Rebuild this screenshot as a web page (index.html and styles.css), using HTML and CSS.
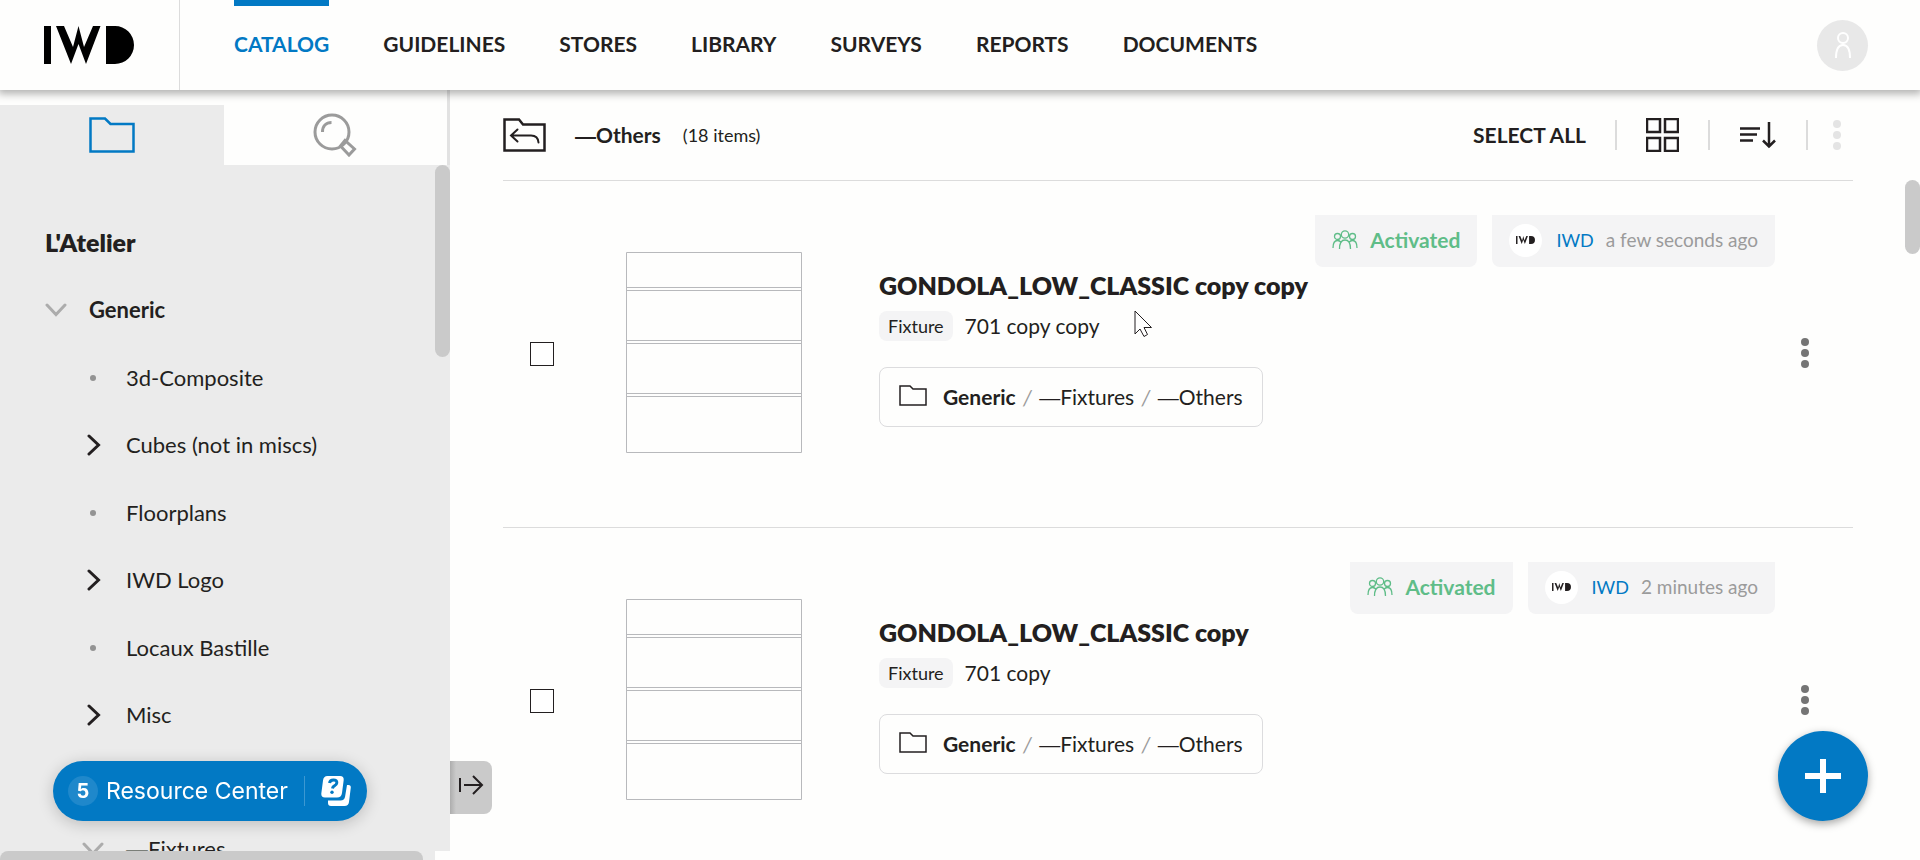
FILE: index.html
```html
<!DOCTYPE html>
<html lang="en">
<head>
<meta charset="utf-8">
<title>IWD Catalog</title>
<link rel="stylesheet" href="styles.css">
</head>
<body>
<svg class="sprite" aria-hidden="true">
  <symbol id="logo" viewBox="0 0 90 38"><path d="M0 0h7v38H0zM12 0h8l9 21 5.500-21 5.500 21 9-21h7.500L42 38l-7.500-20L27 38zM62 0h9a19 19 0 0 1 0 38h-9z"/></symbol>
  <symbol id="folder" viewBox="0 0 46 36"><path d="M1.500 1.500H16l5.500 5.500h23v27.500h-43z"/></symbol>
  <symbol id="folder-small" viewBox="0 0 28 21"><path d="M1 1h10l3 3h13v16H1z"/></symbol>
  <symbol id="people" viewBox="0 0 26 20"><g><circle cx="13" cy="4.500" r="3.700"/><circle cx="5.500" cy="6.500" r="3"/><circle cx="20.500" cy="6.500" r="3"/><path d="M7.500 19c0-5 1.500-9 5.500-9s5.500 4 5.500 9M1 18c0-4 1.500-7.500 4.500-7.500 1.500 0 2.700.7 3.400 2M25 18c0-4-1.500-7.500-4.500-7.500-1.500 0-2.700.7-3.400 2"/></g></symbol>
  <symbol id="dots" viewBox="0 0 8 30"><circle cx="4" cy="4" r="4"/><circle cx="4" cy="15" r="4"/><circle cx="4" cy="26" r="4"/></symbol>
  <symbol id="down" viewBox="0 0 22 14"><path d="M2 2l9 9.500L20 2"/></symbol>
  <symbol id="right" viewBox="0 0 14 22"><path d="M2 2l9.500 9L2 20"/></symbol>
  <symbol id="shelf" viewBox="0 0 176 201"><path d="M.5.500h175v200H.500zM0 35.500h176M0 38.500h176M0 88.500h176M0 91.500h176M0 141.500h176M0 144.500h176"/></symbol>
</svg>

<header class="header">
  <a class="brand" href="#" aria-label="IWD home"><svg width="90" height="38"><use href="#logo"/></svg></a>
  <nav class="nav">
    <a class="nav-link active" href="#">CATALOG</a>
    <a class="nav-link" href="#">GUIDELINES</a>
    <a class="nav-link" href="#">STORES</a>
    <a class="nav-link" href="#">LIBRARY</a>
    <a class="nav-link" href="#">SURVEYS</a>
    <a class="nav-link" href="#">REPORTS</a>
    <a class="nav-link" href="#">DOCUMENTS</a>
  </nav>
  <button class="avatar" aria-label="Account"><svg width="18" height="28" viewBox="0 0 18 28"><circle cx="9" cy="7" r="5"/><path d="M2 27c0-7 2-13 7-13s7 6 7 13"/></svg></button>
</header>

<div class="layout">
  <aside class="sidebar">
    <div class="tabs">
      <button class="tab selected" aria-label="Folders"><svg class="icon" width="46" height="36"><use href="#folder"/></svg></button>
      <button class="tab" aria-label="Search"><svg class="icon search" width="44" height="44" viewBox="0 0 44 44"><circle cx="19" cy="19" r="17"/><path d="M9.500 19c0-6 3.500-9.500 9-9.500M27.500 33l4.500-5.500 9.500 8.500-5.500 6z"/></svg></button>
    </div>
    <div class="tree-pane">
      <h2 class="tree-title">L'Atelier</h2>
      <ul class="tree">
        <li class="node branch root"><svg class="chevron muted" width="22" height="14"><use href="#down"/></svg><a href="#">Generic</a></li>
        <li class="node"><span class="bullet"></span><a href="#">3d-Composite</a></li>
        <li class="node branch"><svg class="chevron" width="14" height="22"><use href="#right"/></svg><a href="#">Cubes (not in miscs)</a></li>
        <li class="node"><span class="bullet"></span><a href="#">Floorplans</a></li>
        <li class="node branch"><svg class="chevron" width="14" height="22"><use href="#right"/></svg><a href="#">IWD Logo</a></li>
        <li class="node"><span class="bullet"></span><a href="#">Locaux Bastille</a></li>
        <li class="node branch"><svg class="chevron" width="14" height="22"><use href="#right"/></svg><a href="#">Misc</a></li>
        <li class="node spacer" aria-hidden="true"></li>
        <li class="node branch open"><svg class="chevron muted" width="22" height="14"><use href="#down"/></svg><a href="#"><span class="dash">—</span>Fixtures</a></li>
      </ul>
      <span class="thumb-y"></span>
    </div>
    <div class="track-x"><span class="thumb-x"></span></div>
    <button class="expander" aria-label="Expand panel"><svg width="26" height="22" viewBox="0 0 26 22"><path d="M2 4v14M6 11h18M15 2l9 9-9 9"/></svg></button>
  </aside>

  <main class="content">
    <div class="toolbar">
      <button class="icon-button" aria-label="Back"><svg class="icon dark" width="43" height="34" viewBox="0 0 43 34"><path d="M1.500 1.500H16l4 5h21.500v26h-40z"/><path class="thin" d="M14.500 11.500L8 17.500l6.500 6M8 17.500h20q7 0 7.500 7"/></svg></button>
      <h1 class="crumb-title"><span class="dash">—</span>Others</h1>
      <span class="count">(18 items)</span>
      <div class="tools">
        <button class="select-all">SELECT ALL</button>
        <span class="divider"></span>
        <button class="icon-button grid" aria-label="Grid view"><svg class="icon dark" width="33" height="34" viewBox="0 0 33 34"><path d="M1 1h13v13H1zM19 1h13v13H19zM1 20h13v13H1zM19 20h13v13H19z"/></svg></button>
        <span class="divider"></span>
        <button class="icon-button sort" aria-label="Sort"><svg class="icon dark" width="38" height="28" viewBox="0 0 38 28"><path d="M1 7.500h20M1 13.500h17M1 19.500h13M30 1v24M24 19.500l6 6 6-6"/></svg></button>
        <span class="divider"></span>
        <button class="icon-button more" aria-label="More" disabled><svg width="8" height="30"><use href="#dots"/></svg></button>
      </div>
    </div>

    <article class="item">
      <input class="check" type="checkbox" aria-label="Select GONDOLA_LOW_CLASSIC copy copy">
      <svg class="shelf" width="176" height="201"><use href="#shelf"/></svg>
      <div class="info">
        <h3 class="name">GONDOLA_LOW_CLASSIC copy copy</h3>
        <p class="meta"><span class="chip">Fixture</span><span>701 copy copy</span></p>
        <div class="path"><svg width="28" height="21"><use href="#folder-small"/></svg><span><a class="strong" href="#">Generic</a> <i>/</i> <a href="#"><span class="dash">—</span>Fixtures</a> <i>/</i> <a href="#"><span class="dash">—</span>Others</a></span></div>
      </div>
      <div class="badges">
        <span class="badge status"><svg width="26" height="20"><use href="#people"/></svg>Activated</span>
        <span class="badge author"><span class="disc"><svg width="19" height="8"><use href="#logo"/></svg></span><a href="#">IWD</a><time>a few seconds ago</time></span>
      </div>
      <button class="icon-button kebab" aria-label="Item menu"><svg width="8" height="30"><use href="#dots"/></svg></button>
    </article>

    <article class="item">
      <input class="check" type="checkbox" aria-label="Select GONDOLA_LOW_CLASSIC copy">
      <svg class="shelf" width="176" height="201"><use href="#shelf"/></svg>
      <div class="info">
        <h3 class="name">GONDOLA_LOW_CLASSIC copy</h3>
        <p class="meta"><span class="chip">Fixture</span><span>701 copy</span></p>
        <div class="path"><svg width="28" height="21"><use href="#folder-small"/></svg><span><a class="strong" href="#">Generic</a> <i>/</i> <a href="#"><span class="dash">—</span>Fixtures</a> <i>/</i> <a href="#"><span class="dash">—</span>Others</a></span></div>
      </div>
      <div class="badges">
        <span class="badge status"><svg width="26" height="20"><use href="#people"/></svg>Activated</span>
        <span class="badge author"><span class="disc"><svg width="19" height="8"><use href="#logo"/></svg></span><a href="#">IWD</a><time>2 minutes ago</time></span>
      </div>
      <button class="icon-button kebab" aria-label="Item menu"><svg width="8" height="30"><use href="#dots"/></svg></button>
    </article>
    <span class="thumb-page"></span>
  </main>
</div>

<button class="resource"><span class="resource-count">5</span><span class="resource-label">Resource Center</span><span class="resource-icon"><svg width="30" height="30" viewBox="0 0 30 30"><path class="sheet" d="M26 9h1.500q2.500 0 2.300 2.500L28 26q-.5 4-4.500 4H10q-3 0-3-3v-2.500h12.500q4 0 4.600-4z"/><path class="sheet" d="M6.500 0H19q4 0 3.700 4L21 17q-.6 4.500-5 4.500H4Q0 21.500.300 17.500L2 4.500Q2.500 0 6.500 0z"/><path class="mark" d="M8.500 7q.5-3 4-3t3.300 2.800q-.2 2-2.400 3-1.700.8-1.900 2.700"/><circle class="mark-dot" cx="11" cy="16.300" r="1.700"/></svg></span></button>
<button class="fab" aria-label="Add"><svg width="36" height="34" viewBox="0 0 36 34"><path d="M18 0v34M0 17h36"/></svg></button>
<svg class="cursor" width="19" height="28" viewBox="0 0 19 28"><path d="M1 1v23l5-5 4 7.500 3.500-2-3.500-7H17.500z"/></svg>
</body>
</html>
```

FILE: styles.css
```css
* { box-sizing: border-box; }

body {
  margin: 0;
  height: 100vh;
  display: flex;
  flex-direction: column;
  overflow: hidden;
  background: #fefefd;
  color: #231f20;
  font: 21px/30px Lato, "Liberation Sans", sans-serif;
}

a { color: inherit; text-decoration: none; }
button { margin: 0; padding: 0; border: 0; background: none; color: inherit; font: inherit; }
h1, h2, h3, p, ul { margin: 0; padding: 0; }
svg { display: block; flex: none; }
.sprite { position: absolute; width: 0; height: 0; }
.dash { font-family: "Liberation Sans", sans-serif; line-height: 1; }

/* Header */
.header {
  position: relative;
  z-index: 2;
  flex: none;
  display: flex;
  align-items: center;
  height: 90px;
  padding-right: 52px;
  background: #fefefd;
  box-shadow: 0 2px 8px 2px rgba(0, 0, 0, .3);
}
.brand {
  display: flex;
  align-items: center;
  align-self: stretch;
  padding: 0 45px 0 44px;
  border-right: 1px solid #dcdcdc;
}
.nav { display: flex; align-self: stretch; gap: 54px; margin-left: 54px; }
.nav-link {
  display: flex;
  align-items: center;
  border-top: 6px solid transparent;
  padding-bottom: 8px;
  font-size: 21px;
  font-weight: 700;
}
.nav-link.active { color: #0279c4; border-top-color: #0279c4; }
.avatar {
  display: flex;
  align-items: center;
  justify-content: center;
  width: 51px;
  height: 51px;
  margin-left: auto;
  border-radius: 50%;
  background: #e8e8e8;
}
.avatar svg { fill: none; stroke: #fff; stroke-width: 2; }

.layout { flex: 1; min-height: 0; display: flex; }
.icon { fill: none; stroke: currentColor; stroke-width: 2.500; }
.dark { stroke: #231f20; }
.search { stroke-width: 3; }
.icon .thin { stroke-width: 2; stroke-linecap: round; }

/* Sidebar */
.sidebar {
  position: relative;
  flex: 0 0 450px;
  display: flex;
  flex-direction: column;
}
.tabs { display: flex; height: 75px; padding-top: 15px; border-right: 3px solid #e2e2e2; }
.tab { flex: 1; display: flex; align-items: center; justify-content: center; color: #9b9b9b; }
.tab.selected { background: #ebebeb; color: #0279c4; }
.tree-pane { position: relative; flex: 1; min-height: 0; overflow: hidden; padding: 43px 0 0 45px; background: #ebebeb; }
.tree-title { height: 68px; font-size: 25px; line-height: 68px; font-weight: 800; }
.tree { list-style: none; font-size: 22px; }
.node { display: flex; align-items: center; gap: 30px; height: 67px; padding-left: 45px; }
.node.branch { height: 68px; padding-left: 42px; gap: 25px; }
.node.root { padding-left: 0; gap: 22px; font-weight: 700; }
.node.open { padding-left: 37px; gap: 22px; }
.node.spacer { height: 66px; }
.bullet { width: 6px; height: 6px; border-radius: 50%; background: #939393; }
.chevron { fill: none; stroke: #231f20; stroke-width: 3; stroke-linecap: round; }
.chevron.muted { stroke: #acacac; }
.thumb-y { position: absolute; top: 0; right: 0; width: 15px; height: 192px; border-radius: 8px; background: #cacaca; }
.track-x { height: 9px; margin-right: 15px; background: #ebebeb; }
.thumb-x { display: block; width: 423px; height: 9px; border-radius: 8px 8px 0 0; background: #cacaca; }
.expander {
  position: absolute;
  left: 100%;
  bottom: 46px;
  z-index: 1;
  display: flex;
  align-items: center;
  padding: 0 0 5px 8px;
  width: 42px;
  height: 53px;
  border-radius: 0 8px 8px 0;
  background: linear-gradient(90deg, #adadad, #cacaca 6px);
}
.expander svg { fill: none; stroke: #231f20; stroke-width: 2; }

/* Content */
.content { position: relative; flex: 1; min-width: 0; padding: 0 67px 0 53px; overflow: hidden; }
.toolbar { display: flex; align-items: center; height: 91px; border-bottom: 1px solid #dcdcdc; }
.crumb-title { margin-left: 29px; font-size: 21px; line-height: 30px; font-weight: 700; }
.count { margin-left: 22px; font-size: 18px; }
.tools { display: flex; align-items: center; margin-left: auto; padding-right: 12px; }
.select-all { font-size: 21px; font-weight: 700; }
.divider { width: 2px; height: 30px; background: #dcdcdc; margin: 0 29px; }
.more { fill: #e4e4e4; }
.sort + .divider { margin: 0 25px 0 29px; }

.item { display: flex; align-items: center; height: 347px; padding: 0 44px 0 27px; border-bottom: 1px solid #dcdcdc; }
.check { appearance: none; flex: none; width: 24px; height: 24px; margin: 0; border: 1px solid #231f20; background: #fff; }
.shelf { margin: 0 0 3px 72px; fill: none; stroke: #b8b9bc; }
.info { flex: 1; margin-left: 77px; padding-bottom: 12px; white-space: nowrap; }
.name { font-size: 25px; line-height: 30px; font-weight: 800; }
.meta { display: flex; align-items: center; gap: 12px; margin-top: 11px; }
.chip { padding: 0 9px; border-radius: 8px; background: #f4f4f5; font-size: 18px; }
.path {
  display: flex;
  align-items: center;
  gap: 16px;
  width: fit-content;
  height: 60px;
  margin-top: 26px;
  padding: 0 19px;
  border: 1px solid #dcdcde;
  border-radius: 8px;
}
.path svg { fill: none; stroke: #231f20; stroke-width: 1.500; margin-bottom: 3px; }
.path i { margin: 0 2px; color: #9b9b9b; }
.strong { font-weight: 700; }
.badges { align-self: flex-start; display: flex; gap: 15px; margin-top: 34px; white-space: nowrap; }
.badge { display: flex; align-items: center; height: 52px; padding: 0 17px 2px; border-radius: 0 0 8px 8px; background: #f4f4f5; }
.status { gap: 12px; color: #5fbd88; font-weight: 700; }
.status svg { fill: none; stroke: currentColor; stroke-width: 1.300; }
.author { font-size: 19px; color: #9b9b9b; }
.author a { margin: 0 12px 0 14px; color: #0279c4; font-size: 18px; }
.disc { display: flex; align-items: center; justify-content: center; width: 33px; height: 33px; border-radius: 50%; background: #fff; }
.disc svg { fill: #231f20; }
.kebab { margin: 0 0 3px 26px; fill: #757575; }
.thumb-page { position: absolute; top: 90px; right: 0; width: 15px; height: 74px; border-radius: 8px; background: #cacaca; }

/* Floating controls */
.resource {
  position: fixed;
  left: 53px;
  bottom: 39px;
  z-index: 3;
  display: flex;
  align-items: center;
  height: 60px;
  padding: 0 16px 0 15px;
  border-radius: 30px;
  background: #0279c4;
  box-shadow: 0 3px 16px rgba(0, 0, 0, .2);
  color: #fff;
  font-family: Inter, "Liberation Sans", sans-serif;
  font-size: 23px;
}
.resource-count { width: 30px; height: 30px; border-radius: 50%; background: #1f88cb; font-size: 20px; font-weight: 700; text-align: center; }
.resource-label { margin: 0 16px 0 8px; }
.resource-icon { padding-left: 16px; border-left: 1px solid #3c98d2; }
.sheet { fill: #fff; }
.mark { fill: none; stroke: #0279c4; stroke-width: 3; }
.mark-dot { fill: #0279c4; }
.fab {
  position: fixed;
  right: 52px;
  bottom: 39px;
  z-index: 3;
  display: flex;
  align-items: center;
  justify-content: center;
  width: 90px;
  height: 90px;
  border-radius: 50%;
  background: #0279c4;
  box-shadow: 0 3px 8px rgba(0, 0, 0, .35);
}
.fab svg { stroke: #fff; stroke-width: 6; }
.cursor { position: fixed; left: 1134px; top: 310px; z-index: 4; fill: #fff; stroke: #231f20; stroke-width: 1; }
```
